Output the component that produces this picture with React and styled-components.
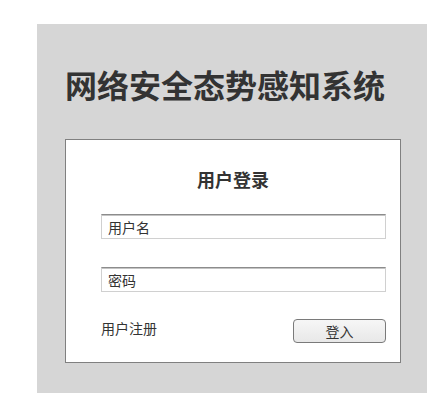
import styled, { createGlobalStyle } from "styled-components";

const GlobalStyle = createGlobalStyle`
  html, body {
    margin: 0;
    padding: 0;
    background: #ffffff;
  }
  body {
    font-family: "Noto Sans CJK SC", "Liberation Sans", sans-serif;
    color: #333333;
  }
`;

const App = () => {
  return (
    <>
      <GlobalStyle />
      <PageStyled>
        <PanelStyled>
          <TitleStyled>网络安全态势感知系统</TitleStyled>
          <CardStyled>
            <HeadingStyled>用户登录</HeadingStyled>
            <FormStyled>
              <InputStyled type="text" placeholder="用户名" />
              <InputStyled type="password" placeholder="密码" />
              <ActionsStyled>
                <LinkStyled>用户注册</LinkStyled>
                <ButtonStyled type="button">登入</ButtonStyled>
              </ActionsStyled>
            </FormStyled>
          </CardStyled>
        </PanelStyled>
      </PageStyled>
    </>
  );
};

const PageStyled = styled.main({
  padding: "24px 0 0 37px",
});

const PanelStyled = styled.section({
  boxSizing: "border-box",
  width: "390px",
  height: "369px",
  backgroundColor: "#d6d6d6",
  padding: "40px 26px 0 28px",
  display: "flex",
  flexDirection: "column",
});

const TitleStyled = styled.h1({
  margin: 0,
  fontSize: "32px",
  lineHeight: "40px",
  fontWeight: 700,
  color: "#333333",
  whiteSpace: "nowrap",
});

const CardStyled = styled.div({
  boxSizing: "border-box",
  marginTop: "35px",
  width: "336px",
  height: "224px",
  backgroundColor: "#ffffff",
  border: "1px solid #808080",
  paddingTop: "27px",
  display: "flex",
  flexDirection: "column",
});

const HeadingStyled = styled.h2({
  margin: 0,
  fontSize: "18px",
  lineHeight: "24px",
  fontWeight: 700,
  textAlign: "center",
  color: "#333333",
});

const FormStyled = styled.form({
  marginTop: "23px",
  paddingLeft: "35px",
  display: "flex",
  flexDirection: "column",
  gap: "28px",
});

const InputStyled = styled.input({
  boxSizing: "border-box",
  width: "285px",
  height: "25px",
  margin: 0,
  padding: "0 6px",
  border: "1px solid #d0d0d0",
  borderTopColor: "#8c8c8c",
  boxShadow: "inset 0 1px 0 #c4c4c4",
  fontFamily: '"Noto Sans CJK SC", "Liberation Sans", sans-serif',
  fontSize: "14px",
  color: "#333333",
  outline: "none",
  "&::placeholder": {
    color: "#333333",
    opacity: 1,
  },
});

const ActionsStyled = styled.div({
  width: "285px",
  display: "flex",
  justifyContent: "space-between",
  alignItems: "flex-start",
  marginTop: "-1px",
});

const LinkStyled = styled.span({
  fontSize: "14px",
  lineHeight: "18px",
  color: "#333333",
  cursor: "pointer",
});

const ButtonStyled = styled.button({
  boxSizing: "border-box",
  width: "93px",
  height: "24px",
  border: "1px solid #7a7a7a",
  borderRadius: "4px",
  background: "linear-gradient(#f6f6f6, #e8e8e8)",
  fontFamily: '"Noto Sans CJK SC", "Liberation Sans", sans-serif',
  fontSize: "14px",
  color: "#333333",
  padding: 0,
  cursor: "pointer",
});

export default App;
